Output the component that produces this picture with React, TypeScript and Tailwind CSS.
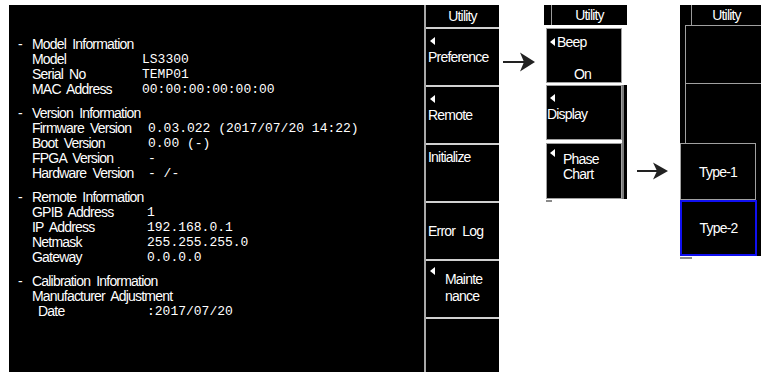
import React from 'react';

const sans = "font-['Liberation_Sans',Arial,sans-serif] tracking-[-0.8px]";
const mono = "font-['Liberation_Mono',monospace] tracking-normal";

const Tri = () => (
  <svg width="5" height="8" viewBox="0 0 5 8" className="block shrink-0">
    <path d="M0 4 L5 0 L5 8 Z" fill="#fff" />
  </svg>
);

const Arrow = ({ w, h }: { w: number; h: number }) => (
  <svg width={w} height={h} viewBox={`0 0 ${w} ${h}`} className="block">
    <path d={`M0 ${h / 2} H${w - 10}`} stroke="#222" strokeWidth="2" />
    <path d={`M${w} ${h / 2} L${w - 15} 0.5 L${w - 11} ${h / 2} L${w - 15} ${h - 0.5} Z`} fill="#222" />
  </svg>
);

type Row = { label: string; value: string };

const sections: { title: string; labelW: string; rows: Row[] }[] = [
  {
    title: 'Model Information',
    labelW: 'w-[110px]',
    rows: [
      { label: 'Model', value: 'LS3300' },
      { label: 'Serial No', value: 'TEMP01' },
      { label: 'MAC Address', value: '00:00:00:00:00:00' },
    ],
  },
  {
    title: 'Version Information',
    labelW: 'w-[116px]',
    rows: [
      { label: 'Firmware Version', value: '0.03.022 (2017/07/20 14:22)' },
      { label: 'Boot Version', value: '0.00 (-)' },
      { label: 'FPGA Version', value: '-' },
      { label: 'Hardware Version', value: '- /-' },
    ],
  },
  {
    title: 'Remote Information',
    labelW: 'w-[115px]',
    rows: [
      { label: 'GPIB Address', value: '1' },
      { label: 'IP Address', value: '192.168.0.1' },
      { label: 'Netmask', value: '255.255.255.0' },
      { label: 'Gateway', value: '0.0.0.0' },
    ],
  },
];

const InfoPanel = () => (
  <div className="w-[415px] bg-black text-white pt-[32px] pl-[9px] text-[14px] leading-[15px] [word-spacing:3px]">
    {sections.map((s, i) => (
      <div key={s.title} className={`flex ${i > 0 ? 'mt-[9px]' : ''}`}>
        <span className="w-[14px]">-</span>
        <div>
          <div className="whitespace-nowrap">{s.title}</div>
          {s.rows.map((r) => (
            <div key={r.label} className="flex">
              <span className={`${s.labelW} shrink-0 whitespace-nowrap`}>{r.label}</span>
              <span className={`${mono} text-[13px] [word-spacing:0px] whitespace-pre`}>{r.value}</span>
            </div>
          ))}
        </div>
      </div>
    ))}
    <div className="flex mt-[9px]">
      <span className="w-[14px]">-</span>
      <div>
        <div className="whitespace-nowrap">Calibration Information</div>
        <div className="whitespace-nowrap">Manufacturer Adjustment</div>
        <div className="flex pl-[6px]">
          <span className="w-[109px] shrink-0">Date</span>
          <span className={`${mono} text-[13px]`}>:2017/07/20</span>
        </div>
      </div>
    </div>
  </div>
);

const UtilityColumn = () => (
  <div className="w-[75px] bg-black text-white border-l-2 border-[#a8a8a8] flex flex-col text-[14px] leading-[16px]">
    <div className="h-[24px] border-b-2 border-[#d0d0d0] flex items-center justify-center">Utility</div>
    <div className="h-[58px] border-b-2 border-[#d0d0d0] pt-[4px] pl-[2px]">
      <div className="h-[16px] flex items-center pl-[2px]"><Tri /></div>
      <div>Preference</div>
    </div>
    <div className="h-[58px] border-b-2 border-[#d0d0d0] pt-[4px] pl-[2px]">
      <div className="h-[16px] flex items-center pl-[2px]"><Tri /></div>
      <div>Remote</div>
    </div>
    <div className="h-[58px] border-b-2 border-[#d0d0d0] pt-[4px] pl-[2px]">
      <div>Initialize</div>
    </div>
    <div className="h-[58px] border-b-2 border-[#d0d0d0] pt-[20px] pl-[2px] [word-spacing:4px]">
      <div>Error Log</div>
    </div>
    <div className="h-[58px] border-b-2 border-[#d0d0d0] pt-[6px] pl-[4px] flex">
      <Tri />
      <div className="ml-[10px] pt-[4px] leading-[17px]">
        <div>Mainte</div>
        <div>nance</div>
      </div>
    </div>
  </div>
);

const PreferencePanel = () => (
  <div className="w-[83px] flex flex-col text-white text-[14px] leading-[16px]">
    <div className="h-[20px] bg-black flex">
      <div className="w-[8px] border-r border-[#9a9a9a]" />
      <div className="flex-1 flex items-center justify-center">Utility</div>
    </div>
    <div className="mt-[3px] ml-[2px] w-[76px] h-[55px] bg-black border border-[#a0a0a0] pt-[5px] pl-[3px]">
      <div className="flex items-center gap-[2px]"><Tri /><span>Beep</span></div>
      <div className="mt-[16px] text-center pr-[6px]">On</div>
    </div>
    <div className="mt-[2px] ml-[2px] flex">
      <div className="w-[76px] flex flex-col">
        <div className="h-[55px] bg-black border border-[#a0a0a0] pt-[4px]">
          <div className="h-[16px] flex items-center pl-[3px]"><Tri /></div>
          <div>Display</div>
        </div>
        <div className="mt-[3px] h-[56px] bg-black border border-[#a0a0a0] pt-[5px] pl-[3px] flex">
          <Tri />
          <div className="ml-[8px] pt-[3px] leading-[15px]">
            <div>Phase</div>
            <div>Chart</div>
          </div>
        </div>
      </div>
      <div className="w-[5px] bg-black border-l-2 border-[#7a7a7a]" />
    </div>
    <div className="mt-[1px] ml-[2px] w-[6px] h-[2px] bg-[#8a8a8a]" />
  </div>
);

const TypePanel = () => (
  <div className="w-[81px] flex flex-col text-white text-[14px] leading-[16px]">
    <div className="h-[20px] bg-black flex">
      <div className="w-[12px] border-r border-[#9a9a9a]" />
      <div className="flex-1 flex items-center justify-center">Utility</div>
    </div>
    <div className="flex bg-black h-[118px]">
      <div className="w-[5px]" />
      <div className="flex-1 flex flex-col border-l border-t border-[#a0a0a0]">
        <div className="h-[58px] border-b border-[#a0a0a0]" />
        <div className="h-[58px]" />
      </div>
    </div>
    <div className="flex">
      <div className="w-[76px] h-[57px] bg-black border border-[#a0a0a0] flex items-center justify-center">Type-1</div>
      <div className="w-[5px] bg-black" />
    </div>
    <div className="flex">
      <div className="w-[77px] h-[56px] bg-black border-2 border-[#1010f0] flex items-center justify-center">Type-2</div>
      <div className="w-[4px] bg-black" />
    </div>
    <div className="mt-[1px] w-[12px] h-[2px] bg-[#8a8a8a]" />
  </div>
);

export default function App() {
  return (
    <div className={`w-[761px] h-[372px] bg-white overflow-hidden flex pt-[5px] ${sans}`}>
      <div className="ml-[9px] flex h-[367px]">
        <InfoPanel />
        <UtilityColumn />
      </div>
      <div className="w-[45px] pt-[47px] pl-[4px]">
        <Arrow w={32} h={20} />
      </div>
      <PreferencePanel />
      <div className="w-[53px] pt-[157px] pl-[10px]">
        <Arrow w={31} h={18} />
      </div>
      <TypePanel />
    </div>
  );
}
